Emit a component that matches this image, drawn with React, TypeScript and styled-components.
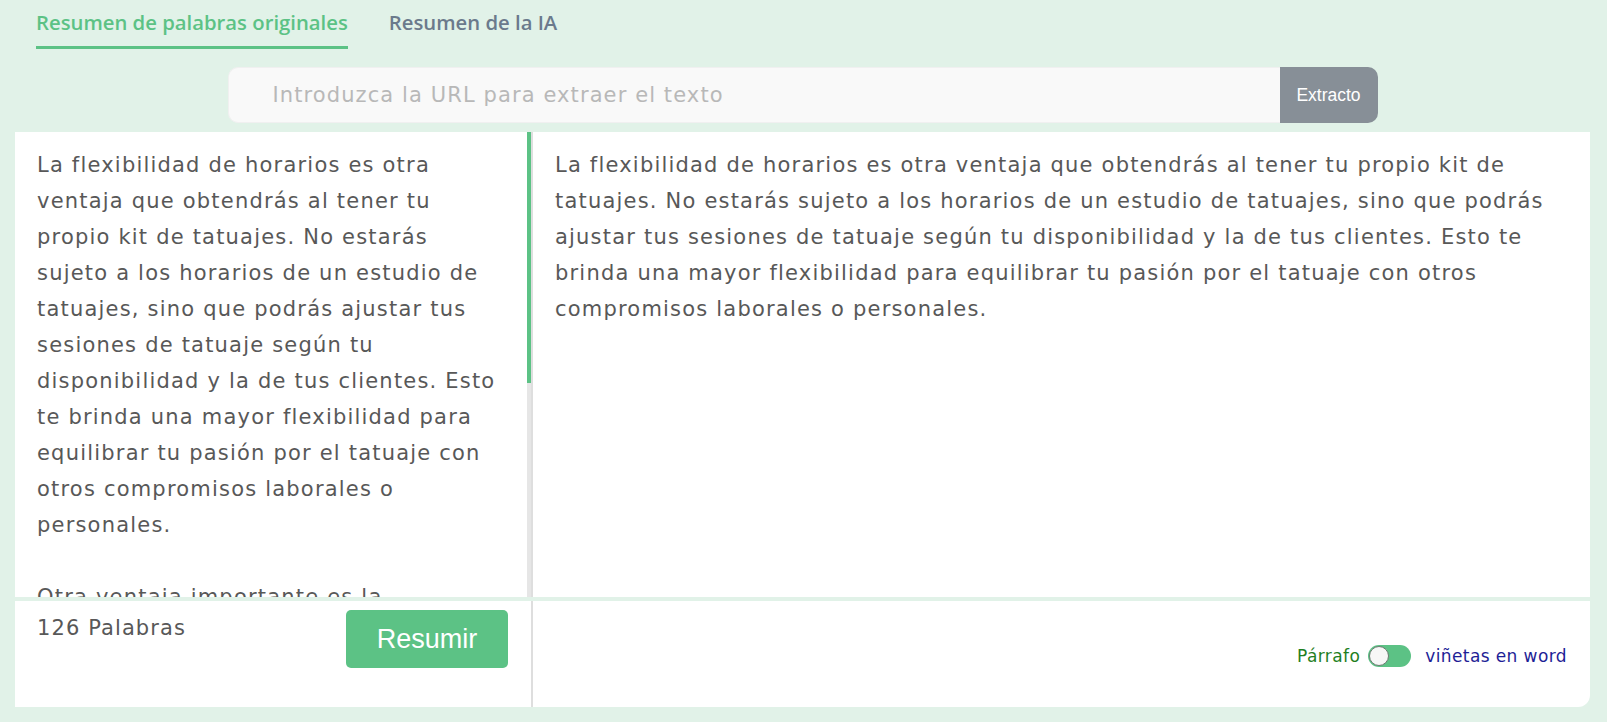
import React, { useLayoutEffect, useRef, useState } from "react";
import styled, { createGlobalStyle } from "styled-components";

const GlobalStyle = createGlobalStyle`
  * { box-sizing: border-box; }
  html, body { margin: 0; padding: 0; }
  body {
    background: #e1f2e8;
    font-family: "DejaVu Sans", "Noto Sans", sans-serif;
  }
`;

const BODY_FONT = `"DejaVu Sans", "Noto Sans", sans-serif`;

const Page = styled.div`
  display: flex;
  flex-direction: column;
  padding: 0 17px 15px 15px;
`;

const Tabs = styled.nav`
  display: flex;
  gap: 41px;
  padding: 10px 0 0 21px;
`;

const Tab = styled.div<{ $active?: boolean }>`
  font-family: "Open Sans", sans-serif;
  font-weight: 600;
  font-size: 20.3px;
  line-height: 24px;
  padding-bottom: 12px;
  color: ${(p) => (p.$active ? "#5cc285" : "#6b7a8c")};
  border-bottom: 3px solid ${(p) => (p.$active ? "#5cc285" : "transparent")};
  cursor: pointer;
`;

const UrlRow = styled.div`
  display: flex;
  width: 1150px;
  height: 56px;
  margin: 18px auto 0;
`;

const UrlInput = styled.input`
  flex: 1;
  height: 100%;
  border: 1px solid #f0f0f0;
  border-right: none;
  border-radius: 10px 0 0 10px;
  background: #f9f9f9;
  padding: 0 0 0 44px;
  font-family: ${BODY_FONT};
  font-size: 21px;
  letter-spacing: 1.1px;
  color: #555;
  outline: none;
  &::placeholder { color: #b8b8b8; }
`;

const ExtractButton = styled.button`
  width: 98px;
  height: 100%;
  border: none;
  border-radius: 0 10px 10px 0;
  background: #878f97;
  color: #fff;
  font-family: "Liberation Sans", Arial, sans-serif;
  font-size: 17.5px;
  cursor: pointer;
`;

const Panel = styled.div`
  margin-top: 9px;
  display: grid;
  grid-template-columns: 518px 1fr;
  grid-template-rows: 465px 106px;
  row-gap: 4px;
`;

const Cell = styled.div<{ $left?: boolean; $corner?: boolean }>`
  background: #fff;
  border-right: ${(p) => (p.$left ? "2px solid #dedede" : "none")};
  border-bottom-right-radius: ${(p) => (p.$corner ? "12px" : "0")};
`;

const EditorCell = styled(Cell)`
  display: flex;
  min-height: 0;
  overflow: hidden;
`;

const TextBody = styled.div<{ $padRight: number }>`
  flex: 1;
  min-width: 0;
  overflow-y: auto;
  scrollbar-width: none;
  &::-webkit-scrollbar { display: none; }
  padding: 15px ${(p) => p.$padRight}px 18px 22px;
  font-family: ${BODY_FONT};
  font-size: 21px;
  letter-spacing: 1.2px;
  line-height: 36px;
  color: #585858;
`;

const ScrollTrack = styled.div`
  position: relative;
  flex: 0 0 4px;
  background: #e6e6e6;
`;

const ScrollThumb = styled.div`
  position: absolute;
  left: 0;
  right: 0;
  background: #5cc285;
`;

const Para = styled.p`
  margin: 0 0 36px;
  &:last-child { margin-bottom: 0; }
`;

const LeftFooter = styled(Cell)`
  display: flex;
  justify-content: space-between;
  align-items: flex-start;
  padding: 9px 23px 0 22px;
`;

const WordCount = styled.span`
  font-family: ${BODY_FONT};
  font-size: 21px;
  letter-spacing: 1.1px;
  line-height: 36px;
  color: #585858;
`;

const SummarizeButton = styled.button`
  width: 162px;
  height: 58px;
  border: none;
  border-radius: 5px;
  background: #5cc285;
  color: #fff;
  font-family: "Liberation Sans", Arial, sans-serif;
  font-size: 27px;
  cursor: pointer;
`;

const RightFooter = styled(Cell)`
  display: flex;
  justify-content: flex-end;
  align-items: center;
  padding: 4px 23px 0 0;
`;

const ToggleLabel = styled.span<{ $tone: "green" | "blue" }>`
  font-family: ${BODY_FONT};
  font-size: 17px;
  letter-spacing: 0.4px;
  color: ${(p) => (p.$tone === "green" ? "#1f7f1f" : "#1e1e96")};
`;

const Switch = styled.span`
  position: relative;
  display: inline-block;
  width: 43px;
  height: 22px;
  border-radius: 11px;
  background: #5cc285;
  margin: 0 14px 0 8px;
`;

const Knob = styled.span`
  position: absolute;
  left: 1px;
  top: 1px;
  width: 20px;
  height: 20px;
  border-radius: 50%;
  background: #f7f7f7;
  border: 1.5px solid #6d7a72;
`;

const P1 =
  "La flexibilidad de horarios es otra ventaja que obtendrás al tener tu propio kit de tatuajes. No estarás sujeto a los horarios de un estudio de tatuajes, sino que podrás ajustar tus sesiones de tatuaje según tu disponibilidad y la de tus clientes. Esto te brinda una mayor flexibilidad para equilibrar tu pasión por el tatuaje con otros compromisos laborales o personales.";
const P2 =
  "Otra ventaja importante es la posibilidad de ahorrar dinero a largo plazo. Al contar con tu propio equipo, no tendrás que pagar por el alquiler de un espacio ni compartir tus ganancias con un estudio. Además, podrás invertir en materiales de calidad que se adapten a tu estilo y a las necesidades de cada cliente, lo que te permitirá ofrecer trabajos mucho más profesionales.";

function ScrollEditor({ children }: { children: React.ReactNode }) {
  const bodyRef = useRef<HTMLDivElement>(null);
  const [thumb, setThumb] = useState({ top: 0, height: 251 });

  const update = () => {
    const el = bodyRef.current;
    if (!el) return;
    const ratio = el.clientHeight / el.scrollHeight;
    const height = Math.max(20, el.clientHeight * ratio);
    const maxScroll = el.scrollHeight - el.clientHeight;
    const top = maxScroll > 0 ? (el.scrollTop / maxScroll) * (el.clientHeight - height) : 0;
    setThumb({ top, height: ratio >= 1 ? 0 : height });
  };

  useLayoutEffect(update, []);

  return (
    <EditorCell $left>
      <TextBody ref={bodyRef} $padRight={25} onScroll={update}>
        {children}
      </TextBody>
      <ScrollTrack>
        <ScrollThumb style={{ top: thumb.top, height: thumb.height }} />
      </ScrollTrack>
    </EditorCell>
  );
}

export default function App() {
  return (
    <>
      <GlobalStyle />
      <Page>
        <Tabs>
          <Tab $active>Resumen de palabras originales</Tab>
          <Tab>Resumen de la IA</Tab>
        </Tabs>
        <UrlRow>
          <UrlInput placeholder="Introduzca la URL para extraer el texto" />
          <ExtractButton>Extracto</ExtractButton>
        </UrlRow>
        <Panel>
          <ScrollEditor>
            <Para>{P1}</Para>
            <Para>{P2}</Para>
          </ScrollEditor>
          <EditorCell>
            <TextBody $padRight={23}>
              <Para>{P1}</Para>
            </TextBody>
          </EditorCell>
          <LeftFooter $left>
            <WordCount>126 Palabras</WordCount>
            <SummarizeButton>Resumir</SummarizeButton>
          </LeftFooter>
          <RightFooter $corner>
            <ToggleLabel $tone="green">Párrafo</ToggleLabel>
            <Switch>
              <Knob />
            </Switch>
            <ToggleLabel $tone="blue">viñetas en word</ToggleLabel>
          </RightFooter>
        </Panel>
      </Page>
    </>
  );
}
